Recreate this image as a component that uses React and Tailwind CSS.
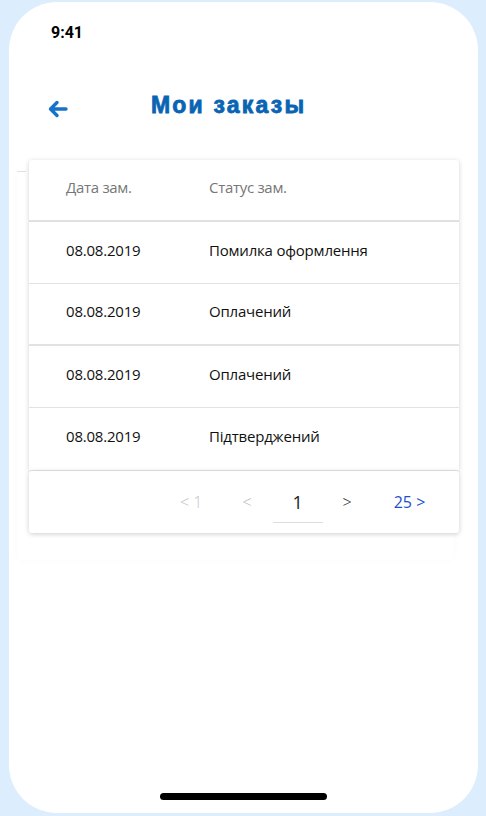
import React from "react";

const rows = [
  ["08.08.2019", "Помилка оформлення"],
  ["08.08.2019", "Оплачений"],
  ["08.08.2019", "Оплачений"],
  ["08.08.2019", "Підтверджений"],
];

export default function App() {
  return (
    <div className="w-[486px] h-[816px] bg-[#dcedfd] pt-[2px] pl-[9px] pr-[8px] pb-[3px] overflow-hidden">
      <div className="relative w-[469px] h-[811px] bg-white rounded-[48px] flex flex-col">
        <div className="pl-[42px] pt-[21px] h-[40px] text-[16px] leading-[20px] font-bold text-black" style={{ fontFamily: "Roboto, 'Liberation Sans', sans-serif" }}>
          9:41
        </div>
        <div className="relative h-[52px] mt-[37px] flex items-center">
          <svg className="absolute left-[38px] top-[20px]" width="22" height="20" viewBox="0 0 22 20" fill="none">
            <path d="M19 10H4M10 3.5L3.5 10L10 16.5" stroke="#1773c9" strokeWidth="3.4" strokeLinecap="round" strokeLinejoin="round" />
          </svg>
          <div className="ml-[142px] text-[23px] font-bold text-[#0a64b4] tracking-[2.2px] [-webkit-text-stroke:0.8px_#0a64b4]" style={{ fontFamily: "'Liberation Sans', Arial, sans-serif" }}>
            Мои заказы
          </div>
        </div>
        <div className="relative ml-[20px] mt-[29px] w-[430px]" style={{ fontFamily: "'Open Sans', 'Noto Sans', sans-serif" }}>
          <div className="absolute left-[-12px] top-[11px] w-[9px] h-[1px] bg-[#e2e2e2]" />
          <div className="absolute left-[-12px] top-[12px] w-[437px] h-[388px] rounded-[6px] shadow-[0_0_8px_rgba(0,0,0,0.025)]" />
          <div className="relative bg-white rounded-t-[3px] shadow-[0_1px_5px_rgba(0,0,0,0.18)]">
            <div className="h-[62px] pb-[5px] flex items-center text-[15px] text-[#777] tracking-[-0.3px] border-b-2 border-[#e0e0e0]">
              <div className="w-[180px] pl-[37px]">Дата зам.</div>
              <div>Статус зам.</div>
            </div>
            {rows.map(([d, s], i) => (
              <div key={i} className={"h-[62px] pb-[5px] flex items-center text-[15px] text-[#111] tracking-[-0.2px] " + (i < 3 ? (i === 1 ? "border-b-2 border-[#e2e2e2]" : "border-b border-[#e2e2e2]") : "")}>
                <div className="w-[180px] pl-[37px]">{d}</div>
                <div>{s}</div>
              </div>
            ))}
          </div>
          <div className="relative mt-[1px] h-[62px] bg-white rounded-[3px] shadow-[0_1px_5px_rgba(0,0,0,0.2)] flex items-center text-[16px] font-light">
            <div className="ml-[151px] text-[#c4c4c4]">&lt; 1</div>
            <div className="ml-[40px] text-[#bbb]">&lt;</div>
            <div className="relative ml-[21px] w-[50px] text-center text-[#222] text-[18px] font-normal">
              1
              <div className="absolute left-0 right-0 top-[33px] h-[1px] bg-[#ddd]" />
            </div>
            <div className="ml-[20px] text-[#222]">&gt;</div>
            <div className="ml-[42px] text-[#1f4fcc] font-normal">25 &gt;</div>
          </div>
        </div>
        <div className="absolute left-[151px] bottom-[13px] w-[167px] h-[7px] rounded-full bg-black" />
      </div>
    </div>
  );
}
